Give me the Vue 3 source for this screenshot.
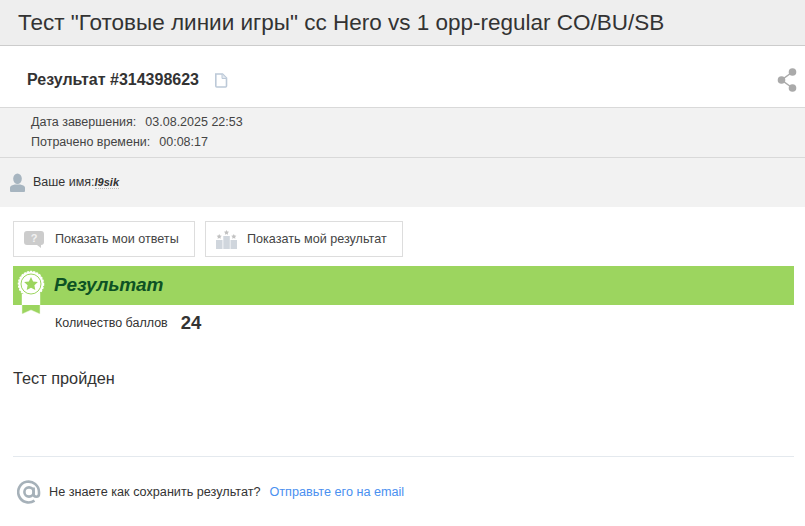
<template>
  <div class="page">
    <header class="test-title">
      <h1>Тест "Готовые линии игры" cc Hero vs 1 opp-regular CO/BU/SB</h1>
    </header>

    <div class="result-head">
      <h2>Результат #314398623</h2>
      <svg class="copy-icon" width="14" height="15" viewBox="0 0 14 15">
        <path d="M1.800 1h6.700l4 4v8a1 1 0 0 1-1 1H2.800a1 1 0 0 1-1-1z" fill="#fff" stroke="#bcc9d8" stroke-width="1.600" />
        <path d="M8 1v4.500h4.500" fill="#e3e9f0" stroke="#bcc9d8" stroke-width="1" />
      </svg>
      <svg class="share-icon" width="20" height="24" viewBox="0 0 20 24">
        <path d="M15.500 4 4.500 12l11 8" fill="none" stroke="#aaa" stroke-width="1.500" />
        <circle cx="15.500" cy="4" r="3.800" fill="#aaa" />
        <circle cx="4.500" cy="12" r="3.800" fill="#aaa" />
        <circle cx="15.500" cy="20" r="3.800" fill="#aaa" />
      </svg>
    </div>

    <div class="meta">
      <div v-for="row in meta" :key="row.label" class="meta-row">
        <span>{{ row.label }}</span><span class="meta-value">{{ row.value }}</span>
      </div>
    </div>

    <div class="user">
      <svg class="user-icon" width="15" height="19" viewBox="0 0 16 20">
        <ellipse cx="8" cy="6" rx="4.600" ry="5.600" fill="#a7b5c0" />
        <path d="M0 19v-3.500c0-2 3-3 5-3.500h6c2 .5 5 1.500 5 3.500V19a1 1 0 0 1-1 1H1a1 1 0 0 1-1-1z" fill="#a7b5c0" />
      </svg>
      <span class="user-label">Ваше имя:</span><span class="user-name">l9sik</span>
    </div>

    <main class="content">
      <div class="actions">
        <button class="action action-answers">
          <svg width="20" height="17" viewBox="0 0 20 17">
            <path d="M3 0h14a3 3 0 0 1 3 3v8a3 3 0 0 1-3 3v3l-4-3H3a3 3 0 0 1-3-3V3a3 3 0 0 1 3-3z" fill="#ccc" />
            <text x="10" y="11" text-anchor="middle" class="q-mark">?</text>
          </svg>
          Показать мои ответы
        </button>
        <button class="action action-result">
          <svg width="21" height="19" viewBox="0 0 21 19">
            <rect x="0" y="10" width="6.500" height="9" fill="#d0d6dd" />
            <rect x="7.300" y="6" width="6.500" height="13" fill="#d0d6dd" />
            <rect x="14.500" y="10" width="6.500" height="9" fill="#d0d6dd" />
            <path d="m3.200 4 .8 1.600 1.800.2-1.300 1.200.3 1.800-1.600-.9-1.600.9.300-1.800L.6 5.800l1.800-.2z" fill="#c2c2c2" />
            <path d="m10.500 0 .8 1.600 1.800.2-1.300 1.200.3 1.800-1.600-.9-1.600.9.300-1.800-1.300-1.200 1.800-.2z" fill="#c2c2c2" />
            <path d="m17.800 4 .8 1.600 1.800.2-1.300 1.200.3 1.800-1.600-.9-1.600.9.300-1.800-1.300-1.200 1.800-.2z" fill="#c2c2c2" />
          </svg>
          Показать мой результат
        </button>
      </div>

      <div class="band">
        <svg class="medal" width="28" height="44" viewBox="0 0 28 44">
          <path d="M5 24h18v20l-9-4-9 4z" fill="#9cd55f" stroke="#e8f5d8" stroke-width=".5" />
          <rect x="5" y="24" width="18" height="11" fill="#fff" />
          <circle cx="14" cy="14" r="12.500" fill="#fff" stroke="#fff" stroke-width="1.500" stroke-dasharray="2 1.200" />
          <circle cx="14" cy="14" r="10" fill="#fff" stroke="#9cd55f" stroke-width="1" />
          <path d="m14 7 2.100 4.400 4.800.6-3.500 3.300.9 4.700-4.300-2.300-4.300 2.300.9-4.700L7.100 12l4.800-.6z" fill="#9cd55f" />
        </svg>
        <h3>Результат</h3>
      </div>

      <div class="score">
        <span>Количество баллов</span><strong>24</strong>
      </div>

      <p class="verdict">Тест пройден</p>

      <div class="save">
        <svg class="at" width="24" height="24" viewBox="0 0 24 24">
          <circle cx="12" cy="12" r="4.600" fill="none" stroke="#a6b1b9" stroke-width="2.600" />
          <path d="M16.600 7.400v6.600a2.700 2.700 0 0 0 5.400 0V12a10.400 10.400 0 1 0-4.500 8.600" fill="none" stroke="#a6b1b9" stroke-width="2.600" />
        </svg>
        <span>Не знаете как сохранить результат?</span>
        <a href="#">Отправьте его на email</a>
      </div>
    </main>
  </div>
</template>

<script setup>
const meta = [
  { label: 'Дата завершения:', value: '03.08.2025 22:53' },
  { label: 'Потрачено времени:', value: '00:08:17' },
]
</script>

<style>
body {
  background: #fff;
  overflow: hidden;
}
</style>

<style scoped>
.page {
  width: 805px;
  height: 526px;
  font-family: "Liberation Sans", Arial, sans-serif;
  color: #333;
  overflow: hidden;
}

.test-title {
  height: 45px;
  background: #eee;
  border-bottom: 1px solid #ccc;
  display: flex;
  align-items: center;
  padding-left: 18px;
}

.test-title h1 {
  margin: 0;
  font-size: 22.500px;
  font-weight: 400;
  white-space: nowrap;
}

.result-head {
  height: 61px;
  box-sizing: border-box;
  display: flex;
  align-items: center;
  padding: 7px 8px 0 27px;
}

.result-head h2 {
  margin: 0;
  font-size: 16px;
  font-weight: 700;
}

.copy-icon {
  margin-left: 15px;
}

.share-icon {
  margin-left: auto;
}

.meta {
  height: 51px;
  box-sizing: border-box;
  background: #f2f2f2;
  border-top: 1px solid #d9d9d9;
  border-bottom: 1px solid #d9d9d9;
  padding: 4px 0 0 31px;
  font-size: 12.500px;
  color: #444;
}

.meta-row {
  line-height: 20px;
}

.meta-value {
  margin-left: 9px;
}

.user {
  height: 49px;
  box-sizing: border-box;
  background: #f2f2f2;
  display: flex;
  align-items: center;
  padding: 0 0 1px 10px;
  font-size: 12.500px;
}

.user-icon {
  margin-top: 1px;
}

.user-label {
  margin-left: 8px;
}

.user-name {
  font-size: 11px;
  font-weight: 700;
  font-style: italic;
  border-bottom: 1px dotted #bbb;
}

.content {
  padding: 14px 11px 0 13px;
}

.actions {
  display: flex;
  gap: 10px;
}

.action {
  height: 36px;
  box-sizing: border-box;
  background: #fff;
  border: 1px solid #ddd;
  display: flex;
  align-items: center;
  font: 12.600px "Liberation Sans", Arial, sans-serif;
  color: #444;
  padding: 0 0 0 10px;
}

.action-answers {
  width: 182px;
  gap: 11px;
}

.action-result {
  width: 198px;
  gap: 10px;
}

.q-mark {
  font: 700 11px "Liberation Sans", Arial, sans-serif;
  fill: #f2f2f2;
}

.band {
  position: relative;
  margin-top: 9px;
  height: 39px;
  background: #9cd55f;
  display: flex;
  align-items: center;
  padding: 0 0 2px 41px;
  box-sizing: border-box;
}

.band h3 {
  margin: 0;
  font-size: 19px;
  font-weight: 700;
  font-style: italic;
  color: #0d5224;
}

.medal {
  position: absolute;
  left: 4px;
  top: 4px;
}

.score {
  display: flex;
  align-items: center;
  height: 36px;
  padding-left: 42px;
  font-size: 12.500px;
}

.score strong {
  margin-left: 13px;
  font-size: 18.500px;
}

.verdict {
  margin: 27px 0 0;
  font-size: 16.300px;
  line-height: 20px;
  padding-bottom: 68px;
  border-bottom: 1px solid #e4e9ee;
}

.save {
  display: flex;
  align-items: center;
  height: 70px;
  padding-left: 4px;
  font-size: 12.650px;
}

.at {
  margin-right: 8px;
}

.save a {
  margin-left: 9px;
  color: #4a90f0;
  text-decoration: none;
}
</style>
